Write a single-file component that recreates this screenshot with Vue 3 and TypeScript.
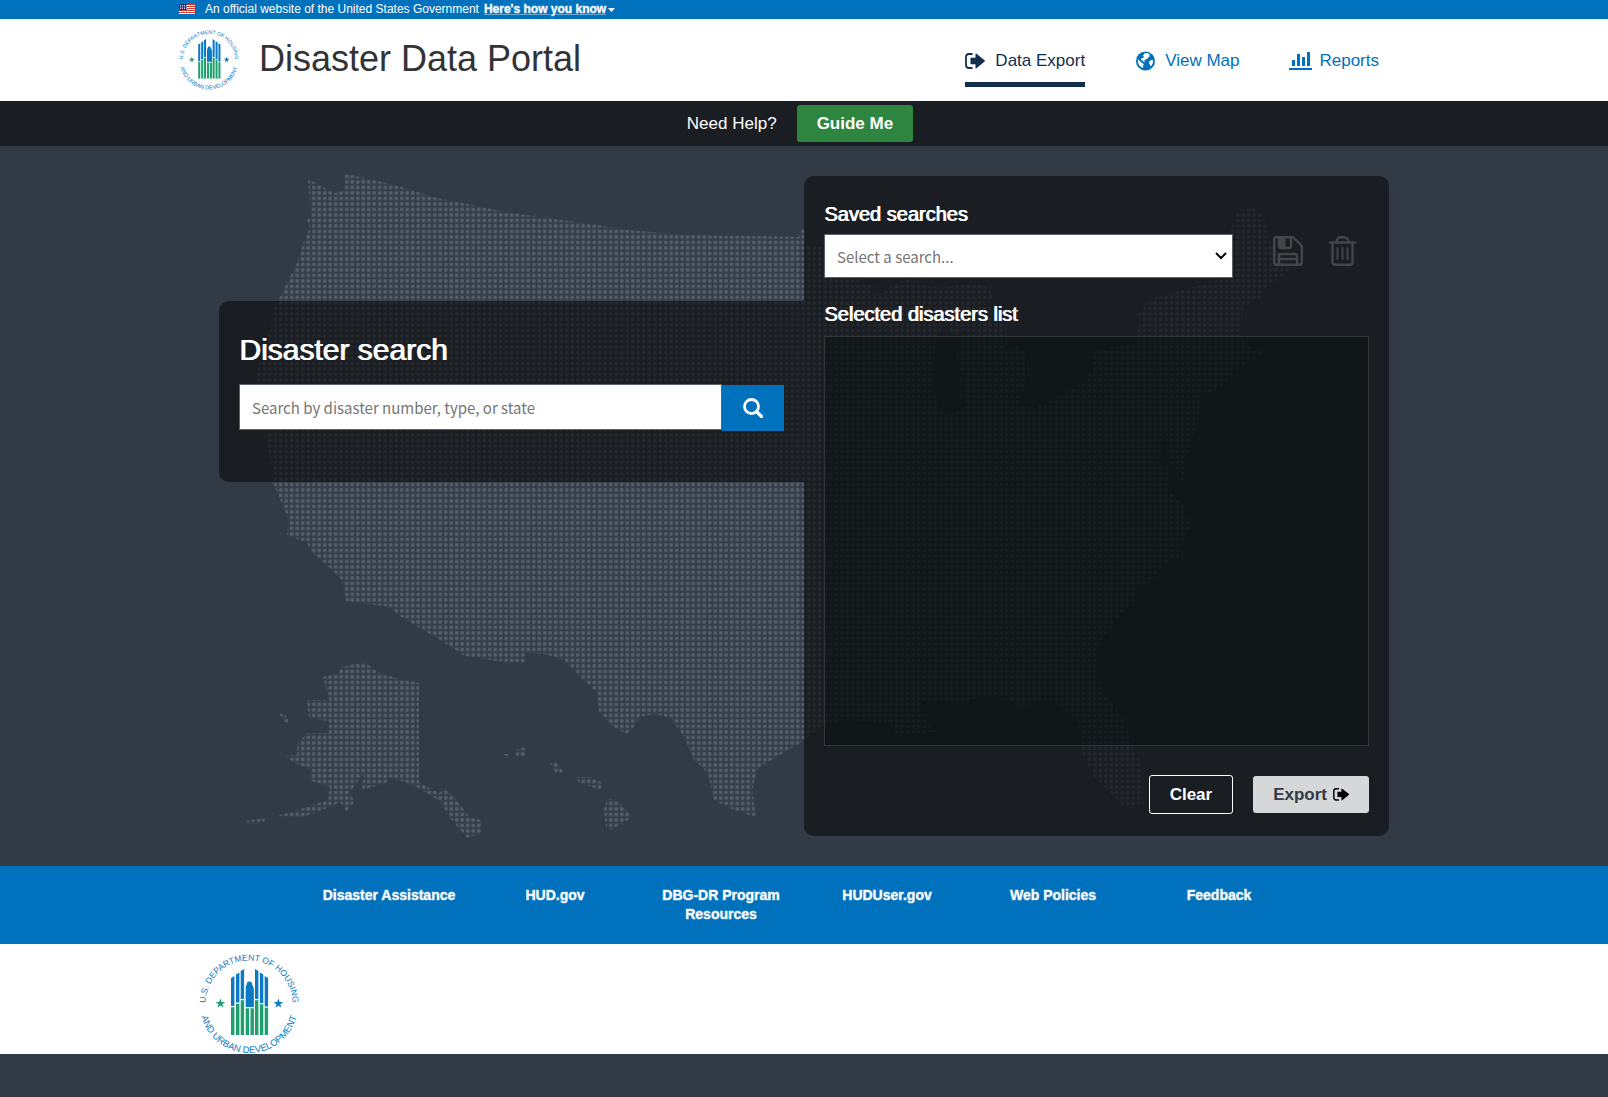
<script setup lang="ts">
import { h, ref } from 'vue'
import type { FunctionalComponent } from 'vue'

const query = ref('')
const savedSearch = ref('')

const footerLinks: string[] = [
  'Disaster Assistance',
  'HUD.gov',
  'DBG-DR Program Resources',
  'HUDUser.gov',
  'Web Policies',
  'Feedback',
]

interface Bar {
  x: number
  top: number
  split: number
  slant: number
}

const bars: Bar[] = [
  { x: 32, top: 22, split: 52, slant: 2 },
  { x: 37, top: 18.6, split: 48.6, slant: 2 },
  { x: 41.7, top: 15, split: 45, slant: 2 },
  { x: 56, top: 15, split: 45, slant: -2 },
  { x: 60.9, top: 18.6, split: 49, slant: -2 },
  { x: 65.7, top: 22, split: 52.4, slant: -2 },
]

const star = (cx: number, cy: number, r: number): string =>
  Array.from({ length: 10 }, (_, i) => {
    const a = -Math.PI / 2 + (i * Math.PI) / 5
    const d = i % 2 ? r * 0.4 : r
    return `${(cx + d * Math.cos(a)).toFixed(2)},${(cy + d * Math.sin(a)).toFixed(2)}`
  }).join(' ')

const Seal: FunctionalComponent<{ uid: string }> = ({ uid }) =>
  h('svg', { viewBox: '0 0 100 100', role: 'img', 'aria-label': 'U.S. Department of Housing and Urban Development' }, [
    h('defs', [
      h('path', { id: `${uid}-top`, d: 'M50 93.5A43.5 43.5 0 0 1 50 6.5A43.5 43.5 0 0 1 50 93.5' }),
      h('path', { id: `${uid}-low`, d: 'M50 0A49.5 49.5 0 0 0 50 99A49.5 49.5 0 0 0 50 0' }),
    ]),
    h('g', { fill: '#0b7ac4', 'font-family': '"Liberation Sans", Arial, sans-serif', 'text-anchor': 'middle' }, [
      h('text', { 'font-size': 8.6 }, [
        h('textPath', { href: `#${uid}-top`, startOffset: '50%' }, 'U.S. DEPARTMENT OF HOUSING'),
      ]),
      h('text', { 'font-size': 9.4 }, [
        h('textPath', { href: `#${uid}-low`, startOffset: '50%' }, 'AND URBAN DEVELOPMENT'),
      ]),
    ]),
    ...bars.flatMap((b) => {
      const l = b.slant > 0 ? b.top + b.slant : b.top
      const r = b.slant > 0 ? b.top : b.top - b.slant
      return [
        h('path', { fill: '#0b7ac4', d: `M${b.x} ${l}L${b.x + 3.4} ${r}V${b.split}H${b.x}Z` }),
        h('path', { fill: '#1fa16f', d: `M${b.x} ${b.split + 1.2}H${b.x + 3.4}V81H${b.x}Z` }),
      ]
    }),
    h('path', {
      fill: '#0b7ac4',
      d: 'M46.7 53V34C46.7 31 48 30.400 48.600 29.600C46.600 30 48 27.400 50.600 27.600C53 27.800 53.400 29.600 53.200 31C54.400 32 54.900 34 54.900 36V53Z',
    }),
    h('path', { fill: '#1fa16f', d: 'M46.7 54.200H50V81H46.700ZM51.500 54.200H54.900V81H51.500Z' }),
    h('polygon', { fill: '#1fa16f', points: star(21.4, 49.6, 5) }),
    h('polygon', { fill: '#0b7ac4', points: star(79.4, 49.6, 5) }),
  ])

const ExportIcon: FunctionalComponent = () =>
  h('svg', { viewBox: '0 0 20 16', 'aria-hidden': 'true' }, [
    h('path', {
      d: 'M7.500 1H4A3 3 0 0 0 1 4V12A3 3 0 0 0 4 15H7.500',
      fill: 'none',
      stroke: 'currentColor',
      'stroke-width': 1.8,
    }),
    h('path', {
      d: 'M5.500 4.800H10.500V1.200Q10.500 0 11.500 .8L19.600 7.300Q20.200 8 19.600 8.600L11.500 15.200Q10.500 16 10.500 14.800V11.200H5.500Z',
      fill: 'currentColor',
    }),
  ])
</script>

<template>
  <div class="page">
    <div class="gov-banner">
      <div class="wide gov-row">
        <svg class="flag" viewBox="0 0 16 10" aria-hidden="true">
          <rect width="16" height="10" fill="#fff" />
          <path d="M0 .5H16M0 2.500H16M0 4.500H16M0 6.500H16M0 8.500H16" stroke="#d8352a" />
          <rect width="8" height="6" fill="#1f2f7d" />
          <path d="M1 1.500H8M1 3H8M1 4.500H8" stroke="#fff" stroke-width=".8" stroke-dasharray="1 1" />
        </svg>
        <span>An official website of the United States Government</span>
        <a class="how" href="#">Here's how you know</a>
        <svg class="caret" viewBox="0 0 7 4" aria-hidden="true"><path d="M0 0H7L3.500 4Z" fill="#fff" /></svg>
      </div>
    </div>

    <header class="site-header">
      <div class="wide header-row">
        <Seal class="seal" uid="seal-header" />
        <h1>Disaster Data Portal</h1>
        <nav class="main-nav" aria-label="Primary">
          <a class="active" href="#"><ExportIcon class="nav-icon" />Data Export</a>
          <a href="#">
            <svg class="nav-icon" viewBox="-1 -.5 21 21" aria-hidden="true">
              <circle cx="10" cy="10" r="10" fill="#0071bc" />
              <path fill="#fff" d="M10.500 1.600L13.500 2.200L15 3.600L13.400 4.600L14.600 5.600L12.800 6.200L11.600 7.800L10 8.400L8.600 9.800L9.600 11.200L8.400 11L6.800 9.600L5.400 9L5.600 7.400L7.600 6.800L8.400 5.200L7 4.600L8.800 3.200L8 2.400Z" />
              <path fill="#fff" d="M2 8L3.400 9.600L5 11L7.200 12.400L8.200 13.800L7.400 15.200L7.600 17.400C4 16.400 1.400 13 2 8Z" />
              <path fill="#fff" d="M16.400 8.600L18 9.600L18 11.400L16.600 14.400L15 15.600L14.600 13.400L13.600 12.400L14 10.400Z" />
            </svg>View Map
          </a>
          <a href="#">
            <svg class="chart-icon" viewBox="0 0 23 18" aria-hidden="true">
              <path fill="#0071bc" d="M3 8H6V14H3ZM8 2H11V14H8ZM13 5H16V14H13ZM18 0H21V14H18ZM0 16H23V18H0Z" />
            </svg>Reports
          </a>
        </nav>
      </div>
    </header>

    <div class="help-bar">
      <span>Need Help?</span>
      <button class="btn guide" type="button">Guide Me</button>
    </div>

    <main class="stage">
      <svg class="map" viewBox="219 146 1170 720" aria-hidden="true">
        <defs>
          <pattern id="dots" x="311" y="190.300" width="5.500" height="5.500" patternUnits="userSpaceOnUse">
            <rect width="5.500" height="5.500" fill="#3a4551" fill-opacity=".35" />
            <rect x=".95" y=".95" width="3.500" height="3.500" rx="1.200" fill="#555d69" />
          </pattern>
        </defs>
        <g fill="url(#dots)" fill-rule="evenodd">
          <path
            d="M308 179L321 186L334 193L344 191L345 174L356 176L395 185L433 197L472 205L511 213L570 221L628 230L686 235L745 236L799 237L800 229L805 229L808 246L822 247L850 256L880 262L866 275L857 283L866 284L875 286L869 293L883 293L895 284L909 279L920 284L944 288L956 285L974 282L988 287L994 298L984 303L1000 312L1007 327L1007 340L1003 353L1017 345L1027 357L1030 373L1021 393L1019 405L1035 408L1059 397L1083 382L1094 367L1092 352L1134 342L1140 320L1136 316L1154 298L1193 287L1229 277L1231 232L1235 212L1253 208L1262 212L1268 232L1272 246L1288 260L1292 267L1282 277L1268 285L1260 297L1243 307L1241 337L1245 343L1258 354L1260 346L1264 353L1249 360L1229 377L1225 385L1209 393L1199 398L1199 420L1191 442L1187 463L1180 492L1174 497L1185 508L1191 527L1180 543L1183 557L1164 563L1152 582L1138 585L1132 603L1114 623L1100 643L1096 667L1102 690L1126 722L1132 747L1142 763L1143 800L1134 808L1124 807L1106 788L1094 777L1081 750L1079 723L1063 708L1051 700L1035 700L1023 708L1011 702L988 695L962 702L940 700L922 703L926 720L938 732L913 733L897 735L889 723L849 720L826 723L814 732L805 740L785 752L758 768L752 790L756 817L734 810L714 800L708 773L694 760L684 737L671 718L655 714L639 717L633 728L627 734L613 727L599 712L597 693L580 677L564 660L544 654L526 653L526 663L497 661L465 656L437 638L398 615L390 607L346 601L342 580L329 567L311 552L307 543L287 535L289 520L273 483L270 457L264 433L256 380L258 367L270 330L272 310L280 297L297 263L303 243L310 228L307 220L311 215Z
               M944 322L936 340L934 360L934 393L942 412L952 415L964 407L964 377L956 360L960 340L968 328L954 336Z
               M1166 432L1161 445L1160 464L1170 472L1171 494L1177 496L1179 470L1168 464Z"
          />
          <path
            d="M364 662L342 667L338 673L323 677L329 700L307 700L309 718L329 721L329 733L307 733L297 745L297 755L284 756L295 763L311 770L309 780L330 787L327 800L295 811L277 816L303 817L330 807L340 802L346 812L354 802L350 792L364 773L362 790L386 783L390 777L415 786L441 802L449 817L463 833L467 838L482 833L481 820L469 817L459 802L445 788L439 793L419 782L419 683L396 678L378 672Z"
          />
          <path
            d="M279 713L285 714L290 723L284 722ZM245 821L265 818L264 823L246 824ZM504 754H509V758H504ZM516 750L525 747V757H516ZM550 763L556 761L564 773L556 773ZM576 777L590 777L603 783L600 791L590 786L579 783ZM607 798L619 802L633 817L611 830L606 827L604 810Z"
          />
        </g>
      </svg>

      <div class="panels">
        <section class="panel search-panel">
          <h2><label for="disaster-search">Disaster search</label></h2>
          <form class="search-row" @submit.prevent>
            <input id="disaster-search" v-model="query" type="text" placeholder="Search by disaster number, type, or state" />
            <button type="submit" aria-label="Search">
              <svg viewBox="0 0 20 20" aria-hidden="true">
                <circle cx="8.500" cy="8.500" r="7" fill="none" stroke="#fff" stroke-width="2.800" />
                <path d="M13.500 13.500L18.500 18.500" stroke="#fff" stroke-width="3.200" stroke-linecap="round" />
              </svg>
            </button>
          </form>
        </section>

        <section class="panel list-panel">
          <h3><label for="saved-search">Saved searches</label></h3>
          <div class="saved-row">
            <div class="select-wrap">
              <select id="saved-search" v-model="savedSearch">
                <option value="">Select a search...</option>
              </select>
              <svg class="chevron" viewBox="0 0 12 8" aria-hidden="true">
                <path d="M1 1L6 6L11 1" fill="none" stroke="#000" stroke-width="2" />
              </svg>
            </div>
            <div class="tools">
              <button type="button" aria-label="Save search" disabled>
                <svg width="30" height="30" viewBox="0 0 30 30" fill="none" stroke="#434548" stroke-width="2.400" aria-hidden="true">
                  <path d="M3.200 1.200H20L28.800 10V26.800Q28.800 28.800 26.800 28.800H3.200Q1.200 28.800 1.200 26.800V3.200Q1.200 1.200 3.200 1.200Z" />
                  <path d="M6 1V10Q6 12 8 12H16Q18 12 18 10V1" />
                  <path d="M6 1H12.500V12H6Z" fill="#434548" stroke="none" />
                  <path d="M6 29V20Q6 18 8 18H22Q24 18 24 20V29M6 23H24" />
                </svg>
              </button>
              <button type="button" aria-label="Delete search" disabled>
                <svg width="27" height="30" viewBox="0 0 27 30" fill="none" stroke="#434548" stroke-width="2.400" aria-hidden="true">
                  <path d="M0 6.500H27M7.500 6.500Q8 1.200 11.500 1.200H15.500Q19 1.200 19.500 6.500M3.500 6.500V26Q3.500 28.800 6.500 28.800H20.500Q23.500 28.800 23.500 26V6.500" />
                  <path d="M8.500 12V23M13.500 12V23M18.500 12V23" stroke-width="2" stroke-linecap="round" />
                </svg>
              </button>
            </div>
          </div>
          <h3 class="list-title">Selected disasters list</h3>
          <div class="list-box"></div>
          <div class="actions">
            <button class="btn clear" type="button">Clear</button>
            <button class="btn export" type="button">Export<ExportIcon class="export-icon" /></button>
          </div>
        </section>
      </div>
    </main>

    <footer>
      <nav class="footer-nav" aria-label="Footer">
        <ul>
          <li v-for="link in footerLinks" :key="link"><a href="#">{{ link }}</a></li>
        </ul>
      </nav>
      <div class="footer-logo">
        <div class="wide">
          <Seal class="seal-large" uid="seal-footer" />
        </div>
      </div>
    </footer>
  </div>
</template>

<style>
body {
  margin: 0;
  background: #323a45;
}
</style>

<style scoped>
.page {
  min-height: 100vh;
  background: #323a45;
  color: #fff;
  font-family: 'Liberation Sans', Arial, Helvetica, sans-serif;
  font-size: 17px;
}

* {
  box-sizing: border-box;
}

svg {
  display: block;
}

h1,
h2,
h3 {
  margin: 0;
  font-weight: 400;
}

button {
  font: inherit;
  cursor: pointer;
}

.wide {
  max-width: 1250px;
  margin: 0 auto;
}

.gov-banner {
  background: #0071bc;
  font-size: 12px;
  line-height: 19px;
}

.gov-row {
  display: flex;
  align-items: center;
}

.flag {
  width: 16px;
  height: 10px;
  margin: 0 10px 2px 0;
}

.how {
  margin: 0 2px 0 5px;
  color: #fff;
  font-weight: 700;
  -webkit-text-stroke: 1px rgba(255, 255, 255, 0.4);
}

.caret {
  width: 7px;
  height: 4px;
}

.site-header {
  background: #fff;
  color: #323337;
}

.header-row {
  display: flex;
  align-items: flex-start;
  padding: 11px 0;
}

.seal {
  width: 60px;
  height: 60px;
  overflow: visible;
}

h1 {
  margin-left: 20px;
  font-size: 36px;
  line-height: 58px;
}

.main-nav {
  display: flex;
  gap: 50px;
  margin: 18px 50px -16px auto;
}

.main-nav a {
  display: flex;
  align-items: center;
  padding-bottom: 8px;
  border-bottom: 5px solid transparent;
  color: #0071bc;
  line-height: 26px;
  text-decoration: none;
}

.main-nav a.active {
  border-color: #112e51;
  color: #112e51;
}

.nav-icon {
  width: 20px;
  margin-right: 10px;
}

.chart-icon {
  width: 23px;
  margin-right: 7px;
}

.help-bar {
  display: flex;
  align-items: center;
  justify-content: center;
  gap: 20px;
  padding: 4px 8px 4px 0;
  background: #1a1d21;
}

.btn {
  padding: 0 20px;
  border: 0;
  border-radius: 3px;
  font-weight: 700;
  line-height: 37px;
}

.guide {
  background: #2e8540;
  color: #fff;
}

.stage {
  display: grid;
}

.map,
.panels {
  grid-area: 1 / 1;
  width: 100%;
  max-width: 1170px;
  margin: 0 auto;
}

.panels {
  display: grid;
  grid-template-columns: 1fr 1fr;
  align-items: start;
  padding: 30px 0;
}

.panel {
  background: rgba(15, 17, 18, 0.7);
}

.search-panel {
  margin-top: 125px;
  padding: 30px 20px 51px;
  border-radius: 10px 0 0 10px;
}

h2 {
  margin-bottom: 15px;
  font-size: 30px;
  line-height: 38px;
  text-shadow: 1px 0 currentColor;
}

.search-row {
  display: flex;
}

input,
select {
  border: 1px solid #5b616b;
  border-radius: 0;
  background: #fff;
  color: #757575;
  font-family: 'Noto Sans CJK JP', 'Noto Sans', sans-serif;
  font-size: 15px;
}

input {
  flex: 1;
  min-width: 0;
  height: 46px;
  padding: 0 12px;
}

input::placeholder {
  color: #757575;
}

.search-row button {
  display: grid;
  place-items: center;
  width: 62px;
  height: 46px;
  margin-top: 1px;
  padding: 0;
  border: 0;
  background: #0071bc;
}

.search-row button svg {
  width: 20px;
}

.list-panel {
  padding: 24px 20px 22px;
  border-radius: 10px;
}

h3 {
  margin-bottom: 6px;
  font-size: 20px;
  line-height: 28px;
  text-shadow: 1px 0 currentColor;
}

.saved-row {
  display: flex;
  margin-bottom: 22px;
}

.select-wrap {
  position: relative;
  flex: 1;
}

select {
  display: block;
  width: 100%;
  height: 44px;
  padding: 0 12px;
  appearance: none;
}

.chevron {
  position: absolute;
  top: 18px;
  right: 6px;
  width: 12px;
  pointer-events: none;
}

.tools {
  display: flex;
  gap: 26px;
  align-items: flex-start;
  padding: 2px 13px 0 40px;
}

.tools button {
  padding: 0;
  border: 0;
  background: none;
}

.list-title {
  margin-bottom: 8px;
}

.list-box {
  min-height: 410px;
  border: 1px solid #333436;
  background: rgba(0, 8, 9, 0.34);
}

.actions {
  display: flex;
  justify-content: flex-end;
  align-items: center;
  gap: 20px;
  margin-top: 29px;
}

.clear {
  border: 1px solid #fff;
  background: #1a1d21;
  color: #fff;
}

.export {
  display: flex;
  align-items: center;
  gap: 6px;
  background: #d6d7d9;
  color: #323a45;
}

.export-icon {
  width: 16px;
  color: #000;
}

.footer-nav {
  padding: 20px 0;
  background: #0071bc;
  font-size: 14px;
  font-weight: 700;
  line-height: 19px;
}

.footer-nav ul {
  display: grid;
  grid-template-columns: repeat(6, 1fr);
  max-width: 996px;
  margin: 0 auto;
  padding: 0;
  list-style: none;
}

.footer-nav li {
  padding: 0 10px;
  text-align: center;
}

.footer-nav a {
  color: #fff;
  text-decoration: none;
  -webkit-text-stroke: 1px rgba(255, 255, 255, 0.4);
}

.footer-logo {
  padding-top: 10px;
  background: #fff;
}

.seal-large {
  width: 100px;
  height: 100px;
  margin-left: 20px;
  overflow: visible;
}
</style>
